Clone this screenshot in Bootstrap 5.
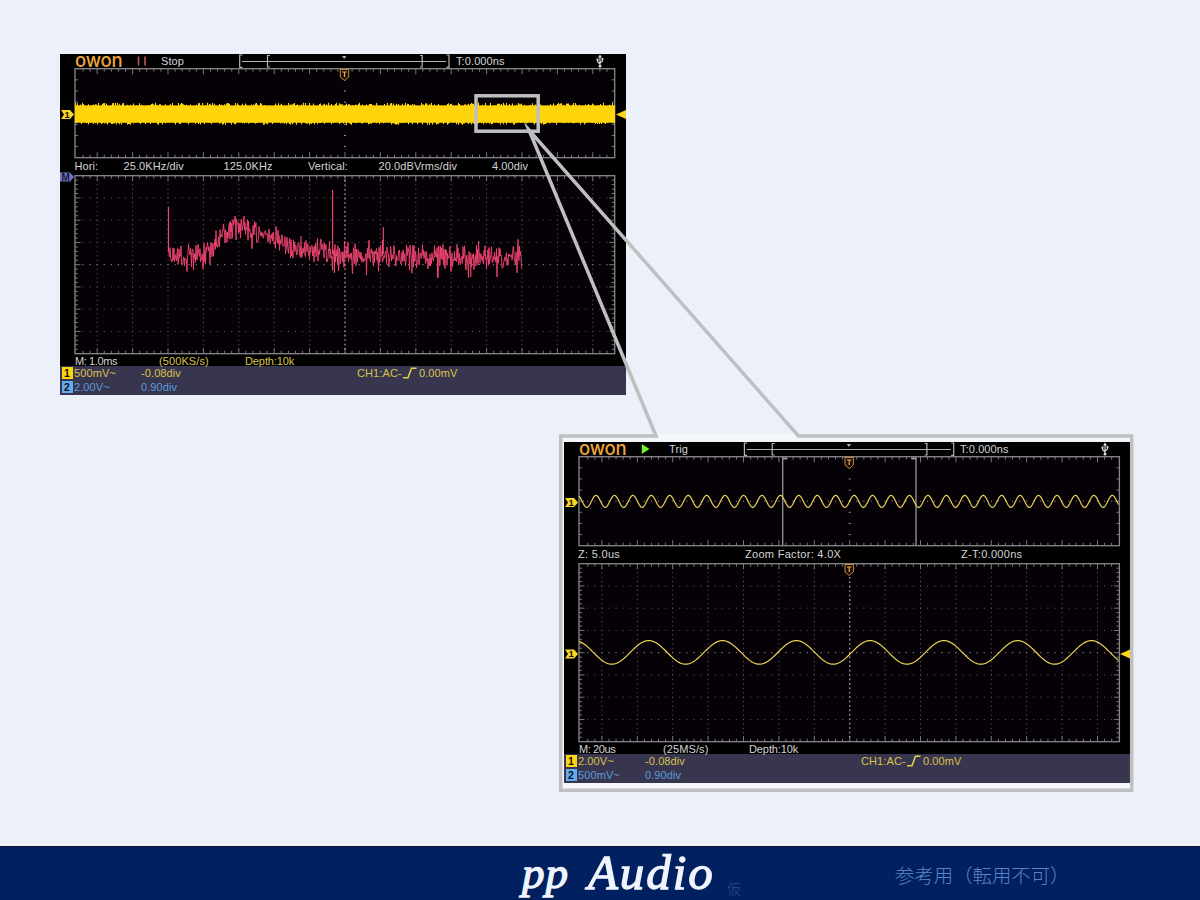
<!DOCTYPE html>
<html lang="ja">
<head>
  <meta charset="utf-8">
  <title>pp Audio</title>
  <link rel="stylesheet" href="https://cdn.jsdelivr.net/npm/bootstrap@5.3.0/dist/css/bootstrap.min.css">
  <style>
    body { width: 1200px; height: 900px; background: #ebf0f9; font-family: "Liberation Sans", Arial, sans-serif; }
    .slide-body { height: 846px; padding: 54px 66px 0 60px; }

    /* oscilloscope screen */
    .scope { width: 566px; height: 341px; background: #000; color: #d4d4d6; font-size: 11px; line-height: 12px; letter-spacing: .1px; }
    .scope span { white-space: nowrap; }
    .scope svg { display: block; overflow: visible; flex: none; }
    .scope-callout { width: 575px; height: 358px; margin-top: 39px; padding: 8px 4px 0 5px; background: #f3f6fb; }
    .bar-top { height: 14px; display: grid; grid-template-columns: 15px 60px 26px 78px 217px 138px 20px; padding-top: 1px; }
    .bar-top .scroll-icon { margin-top: -1px; }
    .scope .brand { font-family: Inter, "Liberation Sans", sans-serif; font-weight: 500; font-size: 18.5px; line-height: 14px; color: #f0a63a; letter-spacing: -.15px; margin-top: -2px; }
    .row-info { height: 18px; display: grid; padding-top: 2px; }
    .cols-fft { grid-template-columns: 14.5px 49px 100px 84.5px 70.5px 113.5px 1fr; }
    .cols-zoom { grid-template-columns: 14px 167px 216px 1fr; letter-spacing: .3px; }
    .row-depth { height: 12px; display: grid; grid-template-columns: 15px 84px 86px 1fr; padding-top: 1px; z-index: 1; }
    .row-depth span:first-of-type { letter-spacing: -.4px; }
    .row-depth span:last-of-type { letter-spacing: -.1px; }
    .status { height: 29px; background: #38364e; }
    .row-ch { height: 14px; display: grid; grid-template-columns: 14px 67px 216px 46px 16px 1fr; padding-top: 1px; }
    .ch-tag { width: 11px; height: 12px; margin-left: 1.5px; color: #111; text-align: center; font-weight: bold; font-size: 10.5px; }
    .ch-one { color: #d9c04c; }
    .ch-two { color: #5a9bdc; }
    .ch-one .ch-tag { background: #fbd60c; }
    .ch-two .ch-tag { background: #63aaf0; }
    .amber { color: #d9c04c; }

    .callout-lines { left: 0; top: 0; pointer-events: none; }

    .foot { height: 54px; background: #002060; border-top: 1px solid #0a1430; }
    .foot-title { width: 207px; height: 53px; margin-left: 520px; font-family: "Liberation Serif", serif; font-style: italic; line-height: 52px; color: #f0f4fd; white-space: nowrap; -webkit-text-stroke: 1.3px #f0f4fd; }
    .foot-title .word-pp { width: 68px; padding-left: 2px; font-size: 45px; letter-spacing: 1px; }
    .foot-title .word-audio { font-size: 49px; line-height: 51px; letter-spacing: 1.9px; }
    .foot-sub { width: 168px; padding-top: 31px; font: 300 13.5px/20px "Noto Sans CJK JP", sans-serif; color: #274d92; }
    .foot-note { padding-top: 14px; font: 300 19.4px/28px "Noto Sans CJK JP", sans-serif; color: #5b82c6; white-space: nowrap; }
  </style>
</head>
<body class="overflow-hidden position-relative">

  <svg width="0" height="0" class="position-absolute">
    <defs>
      <symbol id="scrollbar" viewBox="0 0 212 14" overflow="visible">
        <g fill="none" stroke="#b4b4b6" stroke-width="1.2">
          <path d="M3.500 1H.700V13.4H3.500M207.500 1H210V13.4H207.500M3 7.5H207"/>
          <path d="M31 1.5H28.500V13H31M181 1.5H183.200V13H181"/>
        </g>
        <path d="M103 2h4.400l-2.200 3z" fill="#b4b4b6"/>
      </symbol>
      <symbol id="usb" viewBox="0 0 8 13" overflow="visible">
        <g fill="none" stroke="#ddd" stroke-width="1.100">
          <path d="M4 2V11M1.500 5V6.500L4 9M6.500 3.500V6L4 8"/>
        </g>
        <path d="M4 -.500L6 2.500H2zM.500 3.500h2v2h-2z" fill="#ddd"/>
        <circle cx="4" cy="11.200" r="1.400" fill="#ddd"/>
        <circle cx="6.500" cy="4" r="1.100" fill="#ddd"/>
      </symbol>
      <symbol id="edge" viewBox="0 0 14 12" overflow="visible">
        <path d="M0 10.800H5L8.500 1.200H13.500" fill="none" stroke="#e6cf50" stroke-width="1.500"/>
      </symbol>
    </defs>
  </svg>

  <main class="slide-body d-flex flex-column">

    <section class="scope d-flex flex-column">
      <div class="bar-top">
        <i></i><span class="brand">owon</span>
        <svg width="12" height="12"><path d="M3.500 1.500V10.500M10 1.500V10.500" stroke="#c4525a" stroke-width="1.600"/></svg>
        <span>Stop</span>
        <svg class="scroll-icon" width="212" height="14"><use href="#scrollbar"/></svg>
        <span>T:0.000ns</span>
        <svg width="12" height="13"><use href="#usb" x="2" width="8" height="13"/></svg>
      </div>
      <svg id="fftTime" width="566" height="90" viewBox="0 14 566 90"></svg>
      <div class="row-info cols-fft">
        <i></i><span>Hori:</span><span>25.0KHz/div</span><span>125.0KHz</span><span>Vertical:</span><span>20.0dBVrms/div</span><span>4.00div</span>
      </div>
      <svg id="fftMain" width="566" height="178" viewBox="0 122 566 178"></svg>
      <div class="row-depth position-relative"><i></i><span>M: 1.0ms</span><span class="amber">(500KS/s)</span><span class="amber">Depth:10k</span></div>
      <div class="status">
        <div class="row-ch ch-one"><b class="ch-tag">1</b><span>500mV~</span><span>-0.08div</span><span>CH1:AC-</span><svg width="14" height="12"><use href="#edge"/></svg><span>0.00mV</span></div>
        <div class="row-ch ch-two"><b class="ch-tag">2</b><span>2.00V~</span><span>0.90div</span></div>
      </div>
    </section>

    <div class="scope-callout align-self-end">
      <section class="scope d-flex flex-column">
        <div class="bar-top">
          <i></i><span class="brand">owon</span>
          <svg width="12" height="12"><path d="M2.800 1L10.500 6L2.800 11z" fill="#7df02c"/></svg>
          <span class="ps-1">Trig</span>
          <svg class="scroll-icon" width="212" height="14"><use href="#scrollbar" x=".700"/></svg>
          <span>T:0.000ns</span>
          <svg width="12" height="13"><use href="#usb" x="3" width="8" height="13"/></svg>
        </div>
        <svg id="zoomTime" width="566" height="90" viewBox="0 14 566 90"></svg>
        <div class="row-info cols-zoom">
          <i></i><span>Z: 5.0us</span><span>Zoom Factor: 4.0X</span><span>Z-T:0.000ns</span>
        </div>
        <svg id="zoomMain" width="566" height="178" viewBox="0 122 566 178"></svg>
        <div class="row-depth position-relative"><i></i><span>M: 20us</span><span>(25MS/s)</span><span>Depth:10k</span></div>
        <div class="status">
          <div class="row-ch ch-one"><b class="ch-tag">1</b><span>2.00V~</span><span>-0.08div</span><span>CH1:AC-</span><svg width="14" height="12"><use href="#edge"/></svg><span>0.00mV</span></div>
          <div class="row-ch ch-two"><b class="ch-tag">2</b><span>500mV~</span><span>0.90div</span></div>
        </div>
      </section>
    </div>
  </main>

  <svg class="callout-lines position-absolute" width="1200" height="900" fill="none" stroke="#bfbfc1" stroke-width="3.500" stroke-miterlimit="10">
    <rect x="476" y="95.800" width="62.200" height="35.400"/>
    <path d="M656 436L529 130L798.500 436H1131.700V790.200H560.700V436Z"/>
  </svg>

  <footer class="foot d-flex">
    <div class="foot-title d-flex"><span class="word-pp">pp</span> <span class="word-audio">Audio</span></div>
    <div class="foot-sub">仮</div>
    <div class="foot-note">参考用（転用不可）</div>
  </footer>

  <script src="https://cdn.jsdelivr.net/npm/bootstrap@5.3.0/dist/js/bootstrap.bundle.min.js"></script>
  <script>
    const L = 15, R = 554.7, DIV = 35.4;

    let seed = 7;
    function rnd() {
      seed = (seed * 16807) % 2147483647;
      return seed / 2147483647;
    }

    // frame with ruler ticks, plus the dotted graticule when grid is true
    function frame(top, bottom, grid, cx) {
      const cy = (top + bottom) / 2, v = (bottom - top) / 8;
      const right = R + (cx - 285);
      let ticks = '', dots = '', axis = '';
      for (let i = -38; i <= 38; i++) {
        const x = cx + i * DIV / 5;
        if (x < L + 2 || x > right - 2) continue;
        const len = i % 5 ? 3 : 5.5;
        ticks += `M${x} ${top}v${len}M${x} ${bottom}v${-len}`;
        axis += `M${x - .6} ${cy}h1.2`;
        if (grid) for (let j = -3; j <= 3; j++) if (j) dots += `M${x - .5} ${cy + j * v}h1`;
      }
      const sub = grid ? 5 : 1;
      for (let j = -4 * sub + 1; j < 4 * sub; j++) {
        const y = cy + j * v / sub, len = grid ? (j % 5 ? 3 : 5.5) : (j ? 3 : 5);
        ticks += `M${L} ${y}h${len}M${right} ${y}h${-len}`;
        if (!grid) axis += `M${cx - 1} ${y}h2`;
        if (grid) for (let k = -7; k <= 7; k++) if (k) dots += `M${cx + k * DIV - .5} ${y}h1`;
      }
      const box = `x="${L}" y="${top}" width="${right - L}" height="${bottom - top}"`;
      let s = `<rect ${box} fill="#060107"/>
        <path d="${dots}" stroke="#626168"/>
        <path d="${axis}" stroke="#98979b"/>
        <path d="${ticks}" stroke="#77777b"/>`;
      if (grid) s += `<path d="M${cx} ${top}V${bottom}" stroke="#a5a5a8" stroke-width="1.3" stroke-dasharray="1.6 2.82"/>`;
      return s + `<rect ${box} fill="none" stroke="#88888c" stroke-width="1.3"/>`;
    }

    function chMarker(y) {
      return `<path d="M1 ${y - 4.5}H10L14 ${y}L10 ${y + 4.5}H1L4 ${y}z" fill="#fbd620"/>
        <text x="4.500" y="${y + 3.4}" font-size="9.500" font-weight="bold" fill="#111">1</text>`;
    }

    function trigArrow(y) {
      return `<path d="M556 ${y}L566 ${y - 4.5}V${y + 4.5}z" fill="#fbd620"/>`;
    }

    function shield(y, cx) {
      return `<path d="M${cx - 4.7} ${y - .5}h8.400v7.500l-4.200 3.500l-4.200 -3.500z" fill="#1a0e06" stroke="#c98a3c"/>
        <path d="M${cx - 2.8} ${y + 2}h4.600M${cx - .5} ${y + 2}v5" stroke="#f0a850" stroke-width="1.200"/>`;
    }

    function sine(cy, amp, peak, period) {
      let d = '';
      for (let x = L; x <= R; x += .5)
        d += (d ? 'L' : 'M') + x + ' ' + (cy - amp * Math.cos((x - peak) / period * 2 * Math.PI)).toFixed(2);
      return `<path d="${d}" fill="none" stroke="#e9d552" stroke-width="1.200"/>`;
    }

    // noise band of channel 1
    function band() {
      let d = '';
      for (let x = L + .5; x < R; x++) {
        const up = rnd() < .5 ? rnd() * 2.8 : 0, dn = rnd() < .5 ? rnd() * 2.4 : 0;
        d += `M${x} ${(51.4 - up).toFixed(1)}V${(68.4 + dn).toFixed(1)}`;
      }
      return `<path d="${d}" stroke="#fdd50a" stroke-width="1.100"/><rect x="${L}" y="51.700" width="${R - L}" height="16.800" fill="#fdd50a"/>`;
    }

    // FFT trace: mean level per x, noise around it
    function spectrum() {
      const mean = [[108, 201], [140, 203], [150, 195], [160, 184], [170, 176], [182, 174], [196, 176], [210, 182], [224, 189], [245, 196], [272, 199], [300, 202], [340, 203.5], [462, 203]];
      let d = 'M108.500 153V196';
      for (let x = 109; x <= 461.5; x += .5) {
        const k = mean.findIndex(p => p[0] > x), a = mean[k - 1], b = mean[k];
        let y = a[1] + (b[1] - a[1]) * (x - a[0]) / (b[0] - a[0]);
        y += (rnd() + rnd() - 1) * 14;
        const r = rnd();
        if (r < .07) y += 6 + rnd() * 7;
        else if (r > .96) y -= 4 + rnd() * 6;
        d += `L${x.toFixed(1)} ${y.toFixed(1)}`;
      }
      return `<path d="${d}" fill="none" stroke="#ee4470" stroke-width=".95"/>
        <path d="M108.500 153V198M272.600 136V200M274.400 196V219M323.300 173V200M322.500 186V202M241 182V204M377.500 200V223M410.800 199V223" stroke="#e44a6c" stroke-width="1.200"/>`;
    }

    function draw(id, html) {
      document.getElementById(id).innerHTML = html;
    }

    draw('fftTime', frame(14.7, 103.7, false, 285) + band() + shield(16, 285) + chMarker(60.5) + trigArrow(60.5));
    draw('fftMain', frame(121.7, 299.7, true, 285) + spectrum() +
      `<path d="M0 118.500H10L14 123L10 127.500H0z" fill="#7876c0"/>
       <text x="1.500" y="126.600" font-size="10" font-weight="bold" fill="#17163a">M</text>`);
    draw('zoomTime', frame(14.7, 103.7, false, 285.7) +
      `<path d="M218.700 15V104M352 15V104" stroke="#8d8d91" stroke-width="1.400"/>
       <path d="M218.500 16.500h5M352 16.500h-5" stroke="#a5a5a8" stroke-width="1.500"/>` +
      sine(59.4, 6, 32, 18.44) + shield(16, 285.7) + chMarker(60.5));
    draw('zoomMain', frame(121.7, 299.7, true, 285.7) + sine(210.4, 11.8, 84.7, 73.8) + shield(123, 285.7) + chMarker(212) + trigArrow(212));
  </script>
</body>
</html>
